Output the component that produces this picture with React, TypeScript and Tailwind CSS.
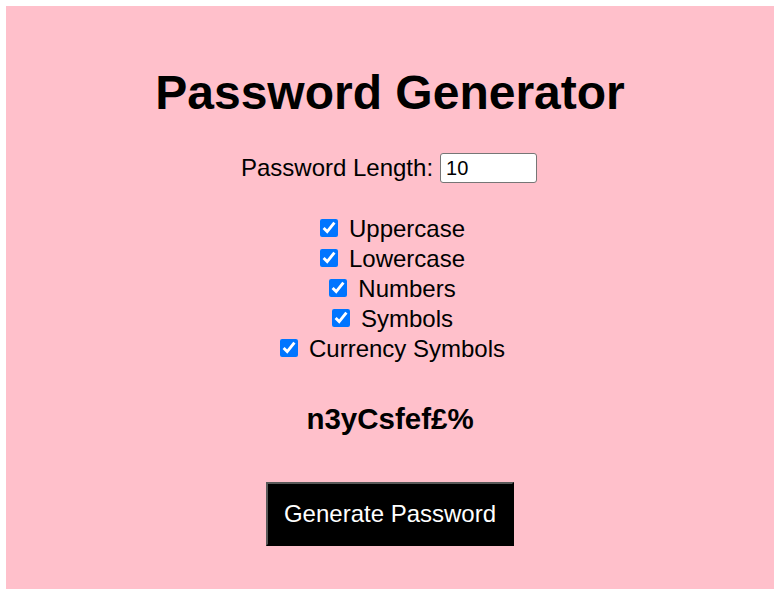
import React, { useState } from "react";

const options = ["Uppercase", "Lowercase", "Numbers", "Symbols", "Currency Symbols"];

export default function App() {
  const [length, setLength] = useState("10");
  const [checked, setChecked] = useState<boolean[]>([true, true, true, true, true]);
  return (
    <div className="min-h-[595px] bg-white pt-[6px] pl-[6px] font-['Liberation_Sans',Arial,sans-serif] text-black">
      <div className="w-[768px] h-[583px] bg-[#ffc0cb] flex flex-col items-center">
        <h1 className="mt-[63px] text-[48px] leading-[48px] font-bold">Password Generator</h1>
        <div className="mt-[36px] h-[30px] flex items-center gap-[7px] pr-[2px]">
          <span className="text-[24px] leading-[30px]">Password Length:</span>
          <input
            type="number"
            value={length}
            onChange={(e) => setLength(e.target.value)}
            className="w-[97px] h-[30px] border border-[#767676] rounded-[3px] bg-white pl-[5px] text-[20px] leading-[28px] outline-none [appearance:textfield] [&::-webkit-inner-spin-button]:appearance-none"
          />
        </div>
        <div className="mt-[31px] flex flex-col items-center">
          {options.map((o, i) => (
            <label key={o} className="h-[30px] flex items-center gap-[11px] pl-[5px]">
              <input
                type="checkbox"
                checked={checked[i]}
                onChange={() => setChecked(checked.map((c, j) => (j === i ? !c : c)))}
                className="w-[18px] h-[18px] m-0 mb-[2px] accent-[#0075ff]"
              />
              <span className="text-[24px] leading-[30px]">{o}</span>
            </label>
          ))}
        </div>
        <div className="mt-[38px] text-[29.5px] leading-[34px] font-bold">n3yCsfef£%</div>
        <button className="mt-[46px] w-[248px] h-[64px] pb-[2px] bg-black text-white text-[24px] leading-[27px] flex items-center justify-center border-2 border-t-[#595959] border-l-[#595959] border-r-black border-b-black">
          Generate Password
        </button>
      </div>
    </div>
  );
}
